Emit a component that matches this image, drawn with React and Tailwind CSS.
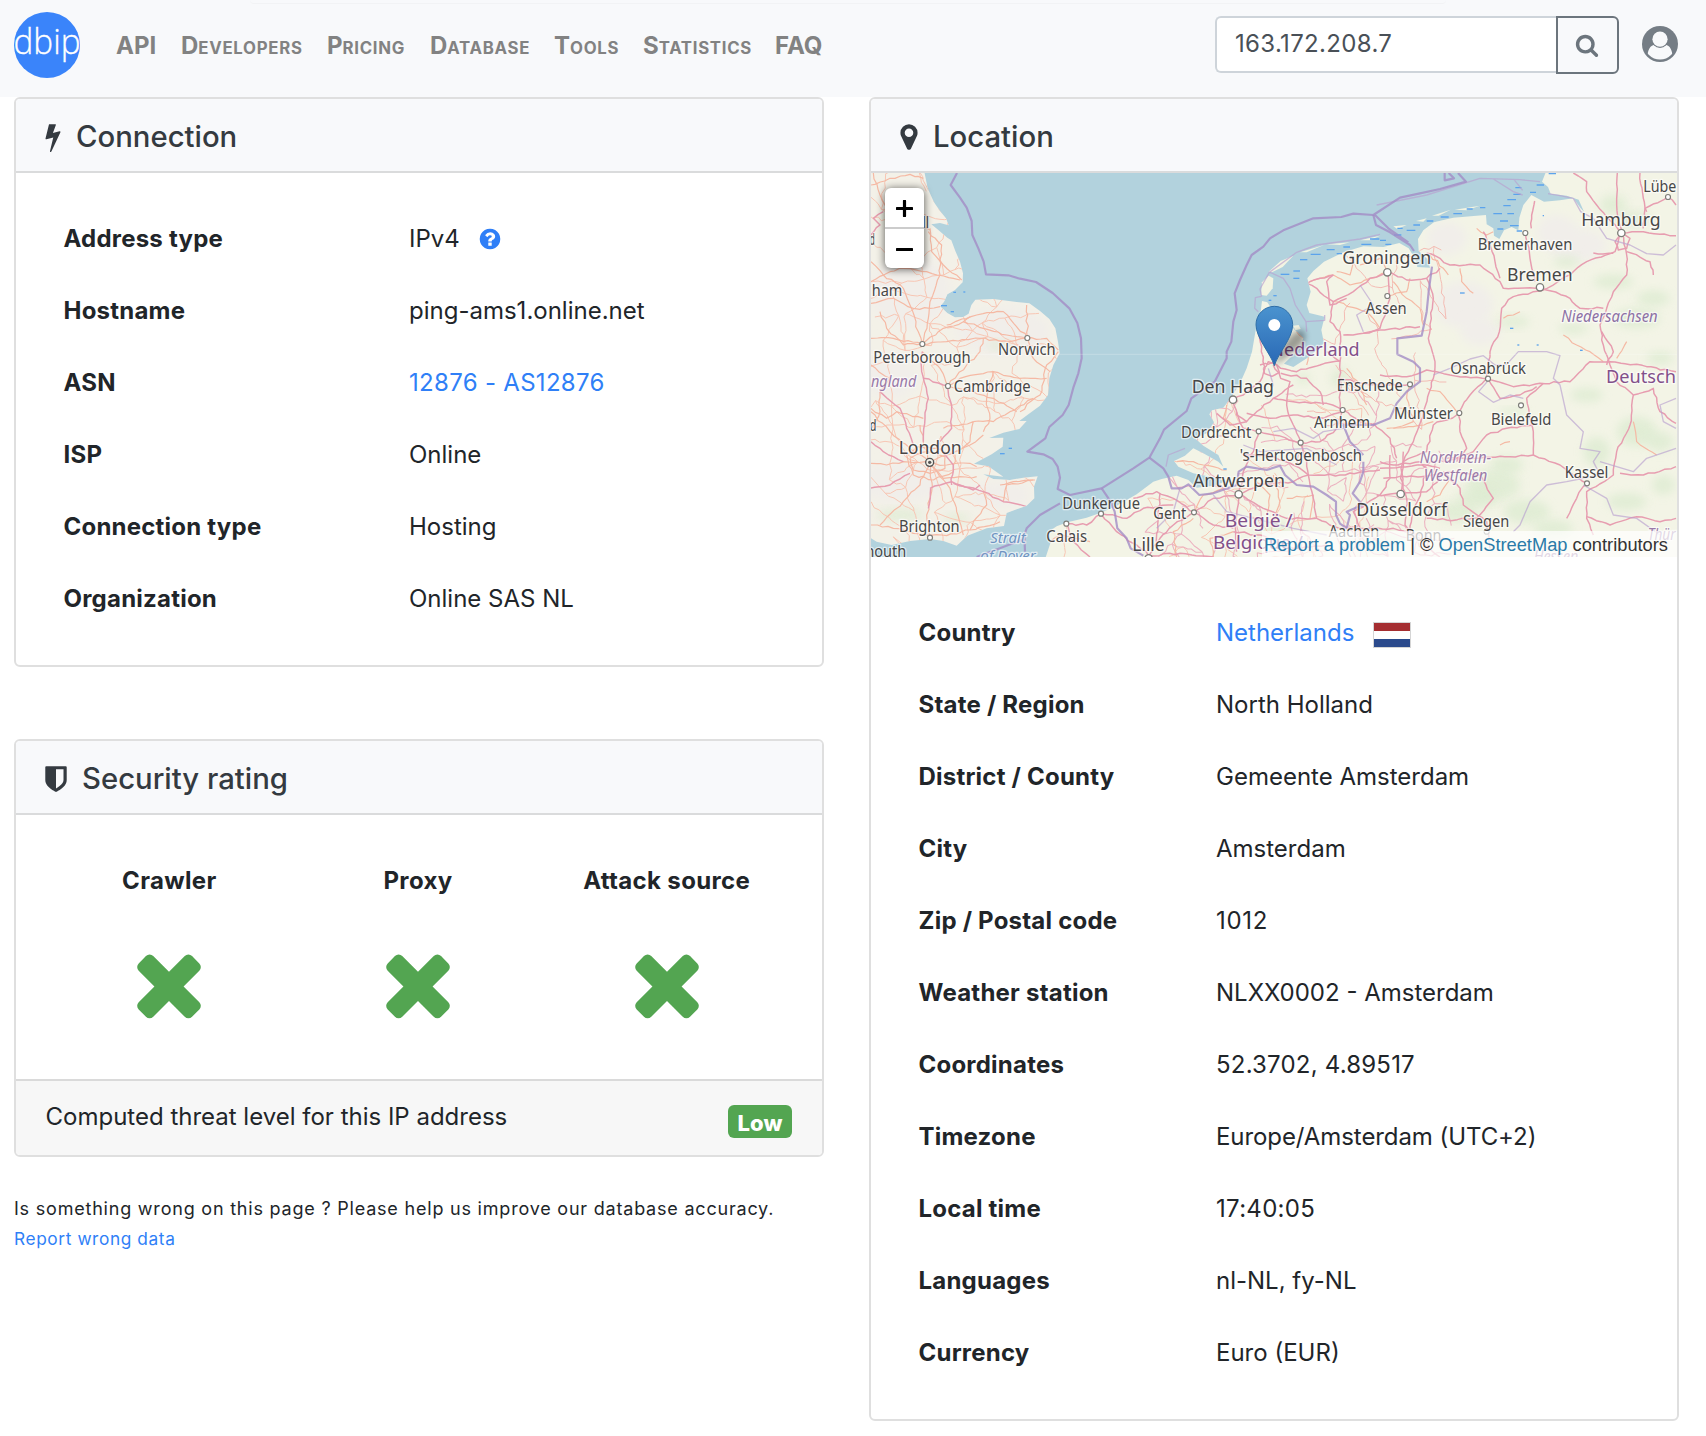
import React from "react";

const ICONS = {
  bolt: "M1333 566q18 20 7 44l-540 1157q-13 25-42 25-4 0-14-2-17-5-25.5-19t-4.5-30l197-808-406 101q-4 1-12 1-18 0-31-11-18-15-13-39l201-825q4-14 16-23t28-9h328q19 0 32 12.5t13 29.5q0 8-5 18l-171 463 396-98q8-2 12-2 19 0 34 15z",
  search:
    "M1216 832q0-185-131.5-316.5t-316.5-131.5-316.5 131.5-131.5 316.5 131.5 316.5 316.5 131.5 316.5-131.5 131.5-316.5zm512 832q0 52-38 90t-90 38q-54 0-90-38l-343-342q-179 124-399 124-143 0-273.5-55.5t-225-150-150-225-55.5-273.5 55.5-273.5 150-225 225-150 273.5-55.5 273.5 55.5 225 150 150 225 55.5 273.5q0 220-124 399l343 343q37 37 37 90z",
  marker:
    "M1152 640q0-106-75-181t-181-75-181 75-75 181 75 181 181 75 181-75 75-181zm256 0q0 109-33 179l-364 774q-16 33-47.5 52t-67.5 19-67.5-19-46.5-52l-365-774q-33-70-33-179 0-212 150-362t362-150 362 150 150 362z",
  shield:
    "M1344 960v-640h-448v1137q119-63 213-137 235-184 235-360zm192-768v768q0 86-33.5 170.5t-83 150-118 127.5-126.5 103-121 77.5-89.5 49.5-42.5 20q-12 6-26 6t-26-6q-16-7-42.5-20t-89.5-49.5-121-77.5-126.5-103-118-127.5-83-150-33.5-170.5v-768q0-26 19-45t45-19h1152q26 0 45 19t19 45z",
  question:
    "M1024 1376v-192q0-14-9-23t-23-9h-192q-14 0-23 9t-9 23v192q0 14 9 23t23 9h192q14 0 23-9t9-23zm256-672q0-88-55.5-163t-138.5-116-170-41q-243 0-371 213-15 24 8 42l132 100q7 6 19 6 16 0 25-12 53-68 86-92 34-24 86-24 48 0 85.5 26t37.5 59q0 38-20 61t-68 45q-63 28-115.5 86.5t-52.5 125.5v36q0 14 9 23t23 9h192q14 0 23-9t9-23q0-19 21.5-49.5t54.5-49.5q32-18 49-28.5t46-35 44.5-48 28-60.5 12.5-81zm384 192q0 209-103 385.5t-279.5 279.5-385.5 103-385.5-103-279.5-279.5-103-385.5 103-385.5 279.5-279.5 385.5-103 385.5 103 279.5 279.5 103 385.5z",
  times:
    "M1490 1322q0 40-28 68l-136 136q-28 28-68 28t-68-28l-294-294-294 294q-28 28-68 28t-68-28l-136-136q-28-28-28-68t28-68l294-294-294-294q-28-28-28-68t28-68l136-136q28-28 68-28t68 28l294 294 294-294q28-28 68-28t68 28l136 136q28 28 28 68t-28 68l-294 294 294 294q28 28 28 68z",
};

function Icon({ name, className }) {
  return (
    <svg viewBox="0 0 1792 1792" className={className} fill="currentColor" aria-hidden="true">
      <path d={ICONS[name]} />
    </svg>
  );
}

/* ---------- map ---------- */

function random(seed) {
  let s = seed * 9301 + 49297;
  return () => {
    s = (s * 9301 + 49297) % 233280;
    return s / 233280 - 0.5;
  };
}

// Deterministic wobble, so that straight segments read as roads.
function wobble(points, seed, amp = 7) {
  const rnd = random(seed);
  let d = `M${points[0]} ${points[1]}`;
  for (let i = 2; i < points.length; i += 2) {
    const [x0, y0, x1, y1] = [points[i - 2], points[i - 1], points[i], points[i + 1]];
    const n = Math.max(1, Math.round(Math.hypot(x1 - x0, y1 - y0) / 16));
    for (let k = 1; k <= n; k++) {
      const t = k / n;
      const a = k === n ? 0 : amp;
      d += `L${(x0 + (x1 - x0) * t + rnd() * a).toFixed(0)} ${(y0 + (y1 - y0) * t + rnd() * a).toFixed(0)}`;
    }
  }
  return d;
}

// Local road web: loosely scattered junctions joined to some of their neighbours.
function web(x0, y0, x1, y1, step, keep, seed) {
  const rnd = random(seed);
  const cols = Math.ceil((x1 - x0) / step) + 1;
  const rows = Math.ceil((y1 - y0) / step) + 1;
  const pts = [];
  for (let r = 0; r < rows; r++)
    for (let c = 0; c < cols; c++) pts.push([x0 + c * step + rnd() * step * 0.9, y0 + r * step + rnd() * step * 0.9]);
  const out = [];
  for (let r = 0; r < rows; r++)
    for (let c = 0; c < cols; c++) {
      const a = pts[r * cols + c];
      const near = [c + 1 < cols && pts[r * cols + c + 1], r + 1 < rows && pts[(r + 1) * cols + c], c + 1 < cols && r + 1 < rows && pts[(r + 1) * cols + c + 1]];
      near.forEach((b, i) => {
        if (b && rnd() + 0.5 < (i === 2 ? keep / 2 : keep)) out.push(wobble([...a, ...b], seed + r * 17 + c * 5 + i, 11));
      });
    }
  return out.join("");
}

const WEB_UK = web(20, 30, 600, 1150, 74, 0.62, 7);
const WEB_LOW = web(880, 700, 1500, 1180, 66, 0.5, 11);
const WEB_RUHR = web(1480, 840, 1760, 1160, 56, 0.55, 23);
const WEB_EAST = web(1350, 260, 1700, 700, 84, 0.36, 31);
const WEB_LOW_MINOR = web(900, 720, 1500, 1180, 90, 0.32, 43);

const UK =
  "M30 20H193L203 70L222 112L240 138L258 160L266 181L240 174L214 178L236 196L262 218L274 226L286 258L300 290L309 325L308 352L285 375L262 388L252 410L240 424L262 444L285 457L310 456L326 446L334 420L346 404L400 402L470 411L508 415L540 438L568 462L586 490L594 530L599 565L580 600L568 640L564 690L540 722L505 748L478 768L500 768L478 792L430 803L388 819L430 818L428 845L395 868L342 896L385 904L430 935L370 928L400 942L450 945L490 938L533 934L522 965L523 1000L500 1022L440 1044L432 1083L380 1090L322 1112L290 1142L250 1128L210 1122L150 1128L95 1140L50 1130L30 1118Z";
const MAINLAND =
  "M556 1180L572 1132L566 1100L590 1084L622 1072L680 1058L726 1042L770 1022L830 988L880 950L905 942L950 932L985 945L1010 968L1060 962L1100 948L1050 935L1000 925L955 905L942 888L975 872L1000 850L1030 865L1075 890L1090 905L1075 870L1030 842L1005 820L1040 805L1062 772L1048 748L1056 736L1090 728L1112 700L1140 655L1160 610L1176 560L1188 490L1202 440L1206 408L1222 412L1240 440L1290 480L1310 500L1330 520L1318 552L1272 596L1300 606L1352 572L1392 535L1384 495L1394 455L1348 444L1340 420L1352 380L1342 340L1360 318L1392 290L1450 262L1510 244L1570 246L1618 234L1646 250L1666 282L1672 306L1710 308L1702 282L1676 258L1674 222L1690 196L1722 172L1780 158L1850 152L1878 150L1880 178L1900 190L1902 212L1918 222L1932 196L1955 186L1975 196L1978 158L1990 120L2014 90L2052 110L2100 106L2140 100L2162 130L2172 140L2156 104L2120 92L2072 86L2064 66L2046 50L2058 20H2460V1180Z";

const ISLANDS = [
  "M1203 390L1206 352L1226 332L1240 340L1238 370L1220 392Z",
  "M1226 320L1262 288L1300 272L1268 306L1236 322Z",
  "M1320 262L1392 240L1340 262Z",
  "M1400 238L1470 232L1440 240Z",
  "M1500 226L1560 212L1530 226Z",
  "M1600 184L1640 180L1612 192Z",
  "M1668 168L1700 160L1690 170Z",
  "M1716 152L1772 134L1736 152Z",
  "M1784 134L1860 122L1820 136Z",
  "M990 892L1040 900L1088 915L1050 925L1000 915Z",
  "M1300 482L1316 480L1322 492L1306 496Z",
];

const BORDERS = [
  "M291 24L272 60L300 98L320 128L335 168L337 210L355 250L371 290L378 328L445 331L480 341L528 351L578 384L628 430L652 474L663 520L665 580L655 625L640 668L626 720L608 750L568 786L556 820L502 860L550 868L578 882L593 905L600 938L593 972L630 990L725 970L820 910L868 878L900 820L912 794L980 738L994 700L1064 650L1100 580L1100 560L1114 530L1120 470L1130 435L1124 385L1140 345L1160 300L1175 270L1210 245L1230 220L1270 196L1360 160L1444 156L1480 146L1540 150L1620 98L1680 85L1740 72L1818 50L1794 24M1754 24L1754 46L1782 40L1766 24",
  "M1540 150L1548 180L1590 202L1650 240L1662 258M1545 150L1585 190L1645 232",
  "M725 970L752 1010L764 1040L772 1090L800 1120L812 1150L850 1172M868 878L910 910L925 935L935 970L965 970L985 958L1018 990L1060 985L1130 960L1136 920L1160 905L1220 915L1260 902L1275 930L1310 960L1360 965L1400 990L1428 1010L1428 1050L1440 1076L1460 1090L1470 1050L1460 1040L1508 1020L1478 985L1500 950L1510 920L1510 890",
  "M1716 305L1706 380L1700 440L1685 512L1612 520L1612 568L1660 590L1680 610L1680 650L1640 680L1610 715L1590 760L1540 780L1450 780L1470 830L1510 870",
  "M600 1015L540 1050L500 1090L493 1110L495 1160M493 1122L350 1176",
];

const THIN_BORDERS = [
  "M1195 440L1184 430L1186 398L1204 394M1205 395L1200 372L1228 322L1310 262L1370 240L1500 222L1560 208",
  "M1230 322L1270 340L1290 370L1306 420L1338 470L1394 466L1394 450M1338 470L1340 500",
  "M1550 120L1700 90L1860 40L1980 44L2040 50M1900 42L1960 80L1988 90M1962 44L1988 76M2064 86L2100 92L2140 100L2162 140L2200 160L2240 220L2310 240L2360 266L2410 270L2448 240",
  "M1720 630L1770 610L1830 582L1870 572L1905 600L1940 598L1975 560L2060 560L2100 572L2080 640L2100 660L2120 750L2170 800L2160 850L2220 860L2200 890L2220 930L2120 950L2060 960L2010 1010L1980 1080L1960 1100",
  "M2170 960L2240 1000L2260 1050L2330 1060L2400 1110M2448 700L2400 720L2410 770L2448 790M2220 890L2320 920L2360 880L2448 850",
  "M1890 640L1856 680L1900 712L1950 690L1990 700",
  "M1500 360L1540 420L1490 450L1510 500M918 905L925 870L975 850M1240 800L1300 790L1360 820L1390 800L1450 790",
  "M1430 900L1340 850L1200 860L1150 840M1220 700L1240 660L1225 610",
  "M1060 990L1100 1040L1180 1060L1300 1090L1400 1110M960 970L940 1040L890 1090",
];

const MAJOR = [
  [2284, 204, 2265, 260, 2180, 290, 2130, 330, 2050, 375, 1960, 395, 1925, 430, 1918, 500, 1890, 560, 1880, 640, 1830, 690, 1790, 750, 1720, 780, 1700, 860, 1630, 890, 1625, 990],
  [2284, 204, 2300, 270, 2300, 330, 2260, 380, 2240, 430, 2220, 480, 2230, 540, 2250, 600, 2270, 650, 2320, 690, 2310, 780, 2270, 860, 2260, 930, 2180, 980, 2180, 1060, 2200, 1110],
  [2040, 367, 1930, 370, 1920, 350, 1860, 300, 1770, 300, 1740, 280, 1700, 265],
  [2040, 367, 2130, 400, 2160, 430, 2230, 430],
  [1920, 340, 1905, 290, 1890, 240, 1870, 200],
  [1996, 204, 2010, 280, 2025, 350],
  [2014, 190, 2015, 150, 2024, 108],
  [2284, 204, 2210, 120, 2180, 80, 2180, 50, 2140, 24],
  [2284, 204, 2270, 120, 2272, 24],
  [2284, 204, 2350, 200, 2448, 212],
  [2284, 204, 2310, 220, 2300, 250, 2275, 255, 2265, 230, 2284, 204],
  [2300, 260, 2370, 290, 2380, 330],
  [2350, 190, 2355, 130, 2424, 96, 2448, 120],
  [2340, 24, 2350, 100, 2360, 140],
  [2260, 265, 2200, 264],
  [1582, 322, 1590, 400, 1560, 490, 1510, 505, 1450, 510],
  [1582, 322, 1640, 345, 1700, 340, 1740, 310],
  [1582, 322, 1530, 340, 1480, 380, 1420, 410, 1370, 370, 1340, 355],
  [1420, 410, 1410, 470, 1440, 500, 1440, 590],
  [1420, 330, 1400, 350, 1410, 420, 1460, 400],
  [1420, 330, 1350, 350, 1270, 420],
  [1700, 340, 1720, 400, 1705, 520, 1725, 590, 1720, 640, 1690, 740, 1660, 830, 1630, 890],
  [1510, 505, 1560, 495, 1680, 485],
  [1884, 641, 1770, 630, 1700, 615, 1640, 635, 1560, 630],
  [1884, 641, 1960, 665, 2040, 655, 2130, 650, 2190, 590, 2250, 590, 2360, 605, 2448, 620],
  [2240, 600, 2260, 560, 2225, 500],
  [2050, 655, 2000, 700, 2010, 760, 2020, 800, 2020, 870, 2100, 900, 2181, 955],
  [2020, 870, 1950, 875, 1860, 880, 1760, 880],
  [1884, 641, 1920, 700, 1980, 690, 2030, 665],
  [2020, 780, 1940, 790, 1880, 810, 1840, 860, 1760, 890],
  [1798, 744, 1800, 800, 1820, 850, 1790, 890],
  [2181, 955, 2150, 1000, 2120, 1060],
  [2280, 925, 2350, 930, 2448, 905],
  [2320, 690, 2380, 670, 2400, 740, 2448, 775],
  [2180, 1055, 2250, 1080, 2330, 1055, 2400, 1070, 2448, 1060],
  [1700, 1060, 1760, 1065, 1850, 1060, 1900, 1000, 1860, 930, 1760, 920],
  [1750, 920, 1800, 970, 1810, 1020, 1880, 1070, 1890, 1150],
  [1560, 890, 1600, 900, 1680, 890, 1700, 910, 1690, 960, 1660, 1040, 1650, 1100, 1740, 1176],
  [1560, 910, 1700, 900, 1740, 910],
  [1570, 940, 1640, 935, 1750, 930],
  [1630, 860, 1622, 940, 1640, 1000, 1635, 1080, 1670, 1120],
  [1550, 990, 1622, 987, 1700, 980, 1740, 940],
  [1590, 870, 1590, 940, 1560, 990, 1480, 1040, 1500, 1090, 1600, 1090, 1680, 1110],
  [1540, 775, 1590, 820, 1610, 880],
  [1448, 735, 1400, 715, 1300, 710, 1240, 700],
  [1448, 735, 1500, 770, 1545, 780],
  [1440, 730, 1440, 590, 1400, 560],
  [1448, 735, 1430, 790, 1380, 830, 1322, 833],
  [1440, 640, 1530, 660, 1650, 658],
  [1240, 600, 1262, 640, 1290, 650, 1280, 720, 1300, 780, 1322, 833, 1340, 890, 1345, 930],
  [1200, 600, 1240, 592, 1262, 610, 1310, 620, 1380, 600, 1440, 588],
  [1210, 610, 1225, 590, 1250, 600, 1258, 622, 1236, 634, 1214, 626, 1210, 610],
  [1262, 625, 1340, 640, 1380, 680, 1390, 720],
  [1196, 500, 1204, 560, 1215, 610, 1200, 650, 1150, 690, 1119, 704],
  [1119, 704, 1130, 750, 1160, 770, 1190, 740, 1240, 700, 1300, 660],
  [1130, 740, 1150, 790, 1196, 799, 1180, 860, 1150, 920, 1136, 988],
  [1196, 799, 1240, 810, 1322, 833],
  [1160, 745, 1230, 760, 1300, 750, 1390, 760, 1448, 740],
  [1070, 745, 1110, 780, 1160, 770],
  [1150, 870, 1230, 870, 1300, 900, 1345, 930, 1440, 930, 1560, 915],
  [1345, 930, 1360, 1000, 1370, 1060, 1440, 1090, 1490, 1085],
  [1136, 988, 1200, 960, 1300, 950, 1345, 930],
  [1136, 988, 1060, 1000, 1002, 1042, 940, 1080, 900, 1120, 866, 1172],
  [1136, 988, 1125, 1080, 1130, 1160],
  [1136, 988, 1210, 1030, 1280, 1060, 1370, 1060],
  [1002, 1042, 1060, 1080, 1120, 1090],
  [1002, 1042, 940, 1000, 890, 980, 820, 1000],
  [1120, 1100, 1200, 1110, 1300, 1150, 1400, 1140],
  [723, 1046, 800, 1060, 850, 1030, 940, 1020],
  [619, 1076, 680, 1080, 723, 1046, 770, 1100, 830, 1140, 866, 1172],
  [619, 1076, 640, 1130, 690, 1176],
  [866, 1172, 960, 1165, 1060, 1176],
  [900, 985, 895, 1060, 890, 1140],
  [187, 560, 185, 620, 205, 700, 195, 760, 190, 830],
  [60, 680, 120, 730, 140, 790, 160, 840],
  [258, 663, 275, 720, 275, 790, 240, 830],
  [264, 663, 190, 640],
  [33, 830, 70, 860, 130, 890],
  [30, 970, 90, 960, 150, 925],
  [210, 970, 275, 950, 300, 960, 370, 980, 430, 1010, 500, 1025],
  [275, 960, 280, 900, 240, 850],
  [280, 955, 340, 975, 360, 960],
  [212, 970, 205, 1030],
  [33, 210, 60, 180, 40, 160, 70, 140],
];

const MINOR = [
  [33, 60, 90, 40, 150, 28, 190, 40],
  [40, 24, 60, 90, 80, 130, 180, 180, 210, 195],
  [33, 290, 70, 330, 130, 370, 150, 420, 175, 500, 187, 537],
  [33, 350, 90, 320, 130, 310, 200, 320, 300, 345],
  [210, 190, 215, 260, 250, 300, 305, 345],
  [205, 200, 245, 240, 240, 330, 210, 410, 205, 460, 187, 537],
  [33, 415, 100, 400, 160, 430, 210, 430, 240, 425],
  [60, 440, 80, 490, 130, 540, 187, 537],
  [33, 520, 100, 520, 187, 537],
  [187, 537, 250, 490, 310, 470, 330, 455],
  [187, 537, 260, 530, 360, 520, 450, 530, 502, 519],
  [310, 470, 370, 490, 440, 510, 502, 519],
  [502, 519, 500, 420],
  [502, 519, 560, 520, 595, 555],
  [502, 519, 430, 440, 350, 450, 260, 480],
  [502, 519, 520, 580, 570, 620],
  [595, 560, 560, 600, 540, 690, 480, 740],
  [33, 600, 90, 640, 60, 680],
  [187, 560, 240, 610, 264, 663],
  [264, 663, 320, 600, 360, 560, 370, 520],
  [264, 663, 340, 680, 400, 700, 470, 740],
  [264, 663, 300, 640, 400, 620, 480, 640, 560, 640],
  [400, 620, 380, 700, 390, 760, 370, 800],
  [340, 770, 400, 770, 450, 740, 520, 700],
  [250, 790, 340, 770, 330, 830, 290, 860],
  [33, 730, 80, 760, 110, 740, 190, 760],
  [33, 790, 60, 740, 60, 680],
  [33, 895, 80, 900, 130, 890, 209, 892],
  [209, 892, 260, 870, 330, 840, 370, 810],
  [209, 892, 150, 850, 90, 800, 33, 740],
  [209, 892, 190, 830, 180, 780],
  [209, 892, 260, 900, 330, 895, 350, 905],
  [209, 892, 180, 960, 130, 1010, 60, 1080],
  [209, 892, 215, 980, 200, 1050, 210, 1118],
  [209, 892, 270, 970, 290, 1040, 310, 1110],
  [209, 892, 250, 940, 350, 935],
  [140, 870, 160, 930, 220, 945, 280, 920, 285, 870, 230, 850, 170, 845, 140, 870],
  [150, 880, 160, 915, 210, 925, 255, 910, 255, 875, 200, 860, 150, 880],
  [33, 1080, 100, 1090, 160, 1105, 260, 1112, 330, 1095, 420, 1070],
  [370, 980, 380, 1020, 340, 1070, 330, 1095],
  [420, 960, 460, 950, 525, 945],
  [430, 1010, 440, 960, 520, 945],
  [1350, 350, 1420, 330, 1470, 360, 1530, 340, 1582, 322],
  [1430, 320, 1470, 330, 1480, 290],
  [1582, 322, 1560, 280, 1500, 300],
  [1600, 350, 1640, 400, 1680, 430, 1690, 480],
  [1582, 393, 1640, 380, 1650, 340],
  [1560, 490, 1530, 450, 1490, 430, 1420, 410],
  [1800, 310, 1805, 350, 1840, 385],
  [1710, 270, 1750, 310, 1765, 330],
  [1850, 190, 1880, 210, 1900, 200],
  [2110, 510, 2150, 540, 2190, 560, 2230, 590],
  [2270, 580, 2300, 530],
  [2320, 770, 2330, 830, 2390, 870],
  [1700, 670, 1740, 680, 1790, 740],
  [1650, 658, 1640, 700, 1660, 770, 1600, 790],
  [1580, 790, 1660, 785, 1720, 770],
  [1100, 720, 1090, 760, 1130, 790],
  [950, 890, 1000, 890, 1060, 905, 1100, 915],
  [1240, 930, 1260, 1010, 1240, 1070],
  [1002, 1042, 1030, 990, 1090, 970],
  [570, 1130, 600, 1110, 690, 1130],
  [950, 1176, 940, 1100, 1000, 1060],
  [1060, 1176, 1050, 1120, 1120, 1100],
  [1280, 1000, 1360, 990, 1350, 1060],
  [1180, 940, 1230, 990, 1220, 1050],
  [1700, 1010, 1740, 990, 1770, 940],
  [1920, 840, 1950, 830],
  [1930, 460, 1960, 450, 1980, 440],
  [1460, 610, 1500, 660, 1520, 720],
  [1340, 600, 1350, 540, 1310, 500],
];

const WOODS = [
  [2330, 800, 60, 45], [2400, 830, 40, 30], [2330, 460, 70, 30], [2260, 350, 60, 22], [2380, 400, 50, 24],
  [2140, 490, 45, 16], [2180, 690, 50, 20], [2210, 860, 40, 44], [1900, 960, 80, 46], [2000, 1040, 70, 36],
  [1790, 1040, 60, 30], [2300, 1010, 60, 26], [2080, 1090, 60, 26], [1440, 640, 26, 30], [1850, 1000, 60, 30],
  [1560, 1130, 60, 24], [1960, 740, 44, 10], [2400, 580, 40, 20], [1240, 1090, 60, 16], [2320, 160, 50, 20],
  [120, 1050, 70, 16], [290, 1060, 40, 12], [420, 540, 40, 12], [100, 160, 30, 20], [2260, 120, 40, 30],
  [1940, 900, 50, 26], [2410, 960, 34, 30], [1330, 640, 22, 16], [2120, 290, 40, 16], [1960, 470, 50, 16],
];

const GREY_PATCHES = [
  [150, 380, 120, 110], [430, 500, 140, 70], [120, 950, 130, 60], [420, 990, 90, 40], [1760, 220, 60, 50],
  [1810, 420, 90, 70], [2150, 240, 90, 50], [90, 640, 80, 60], [2090, 200, 60, 50], [1860, 500, 60, 40],
];

const TIDES = [
  [1262, 328, 26], [1300, 340, 18], [1320, 284, 22], [1352, 268, 30], [1300, 318, 20], [1400, 254, 24], [1450, 246, 20],
  [1504, 238, 30], [1530, 222, 28], [1560, 226, 18], [1602, 210, 22], [1640, 196, 26], [1612, 190, 16], [1660, 180, 20],
  [1700, 168, 20], [1742, 156, 24], [1780, 146, 26], [1820, 132, 18], [1860, 128, 16], [1900, 146, 26], [1930, 122, 22],
  [1942, 104, 26], [1920, 168, 24], [1950, 182, 26], [1912, 192, 18], [1966, 68, 18], [1960, 88, 22], [2030, 60, 22],
  [2010, 82, 18], [2066, 26, 22], [1942, 146, 20], [1226, 406, 8], [243, 422, 18], [272, 440, 10], [280, 382, 8],
  [310, 381, 6], [420, 866, 14], [446, 850, 10], [1800, 384, 14], [1950, 490, 10], [2030, 540, 6], [2160, 556, 8],
  [1090, 912, 10], [1240, 392, 10], [1972, 540, 6], [2048, 152, 4], [1970, 198, 16], [1576, 238, 18], [1430, 266, 16],
];

const TOWNS = [
  [187, 537], [502, 519], [264, 663], [210, 1118], [723, 1046], [619, 1076], [1002, 1042], [1196, 799], [1322, 833],
  [1582, 393], [1996, 204], [2424, 96], [1884, 641], [1650, 658], [1448, 735], [1798, 744], [1983, 721], [2181, 955], [1880, 1100],
];
const CITIES = [[1119, 704], [1136, 988], [1582, 322], [2040, 367], [2284, 204], [1622, 987], [866, 1180]];

// text, left x, baseline y, drawn width, size
const PLACE_NAMES = [
  ["Peterborough", 41, 592, 292, 46], ["Norwich", 415, 569, 173, 46], ["Cambridge", 282, 680, 231, 46],
  ["London", 117, 866, 189, 53], ["Brighton", 118, 1100, 182, 46], ["Dunkerque", 608, 1030, 233, 46],
  ["Calais", 560, 1129, 122, 46], ["Gent", 881, 1060, 99, 46], ["Lille", 818, 1157, 97, 53],
  ["Den Haag", 996, 681, 247, 53], ["Dordrecht", 964, 816, 211, 46], ["'s-Hertogenbosch", 1140, 887, 367, 46],
  ["Antwerpen", 1000, 964, 276, 53], ["Groningen", 1448, 295, 267, 53], ["Assen", 1518, 446, 123, 46],
  ["Bremerhaven", 1854, 254, 284, 46], ["Bremen", 1942, 345, 197, 53], ["Hamburg", 2165, 182, 238, 53],
  ["Osnabrück", 1772, 624, 227, 46], ["Enschede", 1431, 675, 198, 46], ["Arnhem", 1363, 786, 168, 46],
  ["Münster", 1603, 761, 177, 46], ["Bielefeld", 1894, 777, 181, 46], ["Kassel", 2115, 938, 131, 46],
  ["Düsseldorf", 1490, 1050, 272, 53], ["Siegen", 1810, 1083, 139, 46], ["Aachen", 1407, 1115, 152, 46],
  ["Bonn", 1638, 1127, 107, 46], ["Lübe", 2351, 80, 99, 46], ["ham", 36, 392, 92, 46], ["ll", 188, 187, 20, 46],
  ["d", 30, 238, 15, 46], ["d", 30, 795, 20, 46], ["mouth", 3, 1173, 137, 46],
];
const AREAS = [
  ["Nederland", 1232, 571, 268, 54, "#82508a", "normal"],
  ["Deutsch", 2239, 651, 210, 54, "#82508a", "normal"],
  ["België /", 1095, 1083, 204, 54, "#82508a", "normal"],
  ["Belgique /", 1060, 1151, 270, 54, "#82508a", "normal"],
  ["ngland", 34, 664, 136, 48, "#9a7aa8", "italic"],
  ["Niedersachsen", 2105, 469, 289, 46, "#8d71a5", "italic"],
  ["Nordrhein-", 1680, 891, 214, 46, "#9a7aa8", "italic"],
  ["Westfalen", 1692, 945, 191, 46, "#9a7aa8", "italic"],
  ["Thür", 2364, 1123, 84, 46, "#9a7aa8", "italic"],
  ["Hessen", 2022, 1188, 134, 46, "#9a7aa8", "italic"],
  ["Strait", 392, 1133, 106, 44, "#6f94c2", "italic"],
  ["of Dover", 362, 1186, 166, 44, "#6f94c2", "italic"],
];

function MapDrawing() {
  return (
    <svg viewBox="33 24 2418 1152" className="block h-full w-full" preserveAspectRatio="none">
      <defs>
        <clipPath id="land"><path d={UK} /><path d={MAINLAND} /></clipPath>
        <filter id="soft" x="-50%" y="-50%" width="200%" height="200%"><feGaussianBlur stdDeviation="14" /></filter>
        <filter id="shade" x="-50%" y="-50%" width="200%" height="200%"><feGaussianBlur stdDeviation="9" /></filter>
        <linearGradient id="pin" x1="0" y1="0" x2="0" y2="1">
          <stop offset="0" stopColor="#4a93cf" /><stop offset="1" stopColor="#2968b5" />
        </linearGradient>
      </defs>
      <rect x="33" y="24" width="2418" height="1152" fill="#b2d2dd" />
      <path d={UK} fill="#f3f1e8" />
      <path d={MAINLAND} fill="#f3f4e6" />
      {ISLANDS.map((d) => <path key={d} d={d} fill="#f3f4e2" />)}
      <g clipPath="url(#land)">
        {GREY_PATCHES.map(([x, y, rx, ry]) => (
          <ellipse key={`${x}${y}`} cx={x} cy={y} rx={rx} ry={ry} fill="#f1eeea" filter="url(#soft)" />
        ))}
        {WOODS.map(([x, y, rx, ry]) => (
          <ellipse key={`${x}${y}`} cx={x} cy={y} rx={rx} ry={ry} fill="#dcebd0" opacity=".75" filter="url(#soft)" />
        ))}
        <g fill="none" strokeLinejoin="round">
          <path d={WEB_UK} stroke="#f7c6b4" strokeWidth="3" />
          <path d={WEB_LOW_MINOR} stroke="#f7c6b4" strokeWidth="3" />
          <path d={WEB_LOW} stroke="#ecb2c0" strokeWidth="3.2" />
          <path d={WEB_RUHR} stroke="#ecb2c0" strokeWidth="3.2" />
          <path d={WEB_EAST} stroke="#f3bcb4" strokeWidth="3" />
          {MINOR.map((p, i) => <path key={i} d={wobble(p, i + 3)} stroke="#f5b9a4" strokeWidth="3.6" />)}
          {MAJOR.map((p, i) => <path key={i} d={wobble(p, i + 40, 6)} stroke="#e79db0" strokeWidth="4.4" />)}
        </g>
      </g>
      <g stroke="#5ba3ec" strokeWidth="4">
        {TIDES.map(([x, y, w]) => <path key={`${x}-${y}`} d={`M${x} ${y}h${w}`} />)}
      </g>
      <g fill="none" strokeLinejoin="round">
        {THIN_BORDERS.map((d) => <path key={d} d={d} stroke="#b9a0d0" strokeOpacity=".65" strokeWidth="4" />)}
        {BORDERS.map((d) => <path key={d} d={d} stroke="#a38cc6" strokeOpacity=".8" strokeWidth="6.5" />)}
      </g>
      <path d="M33 568H2451" stroke="#ffffff" strokeOpacity=".35" strokeWidth="2" />
      {TOWNS.map(([x, y]) => (
        <circle key={`${x}${y}`} cx={x} cy={y} r="7.5" fill="#fff" stroke="#7d7d78" strokeWidth="3.5" />
      ))}
      {CITIES.map(([x, y]) => (
        <circle key={`${x}${y}`} cx={x} cy={y} r="11" fill="#fff" stroke="#7d7d78" strokeWidth="4" />
      ))}
      <circle cx="209" cy="892" r="12" fill="#f3f1e8" stroke="#555" strokeWidth="4" />
      <circle cx="209" cy="892" r="5" fill="#555" />
      <g transform="translate(-1 2)" style={{ fontFamily: '"Noto Sans", sans-serif', paintOrder: "stroke" }} stroke="#ffffff" strokeOpacity=".6" strokeWidth="8" strokeLinejoin="round">
        {AREAS.map(([t, x, y, w, s, c, st]) => (
          <text key={t} x={x} y={y} fontSize={s} fill={c} fontStyle={st} textLength={w} lengthAdjust="spacingAndGlyphs">{t}</text>
        ))}
        {PLACE_NAMES.map(([t, x, y, w, s]) => (
          <text key={t + y} x={x} y={y} fontSize={s} fill="#474747" textLength={w} lengthAdjust="spacingAndGlyphs">{t}</text>
        ))}
      </g>
      <path d="M1243 602L1262 556Q1290 500 1325 494Q1350 512 1318 546Z" fill="#000" opacity=".36" filter="url(#shade)" />
      <path d="M1243 602C1232 565 1188 520 1188 479A55 55 0 0 1 1298 479C1298 520 1254 565 1243 602Z" fill="url(#pin)" stroke="#2e6ea8" strokeWidth="3" />
      <circle cx="1243" cy="480" r="18" fill="#fff" />
    </svg>
  );
}

/* ---------- page ---------- */

const NAV = [
  ["API", "", "w-[40px]"], ["D", "evelopers", "w-[121px]"], ["P", "ricing", "w-[78px]"], ["D", "atabase", "w-[99px]"],
  ["T", "ools", "w-[64px]"], ["S", "tatistics", "w-[107px]"], ["FAQ", "", "w-[48px]"],
];

const CONNECTION = [
  ["Address type", "IPv4", "help"], ["Hostname", "ping-ams1.online.net"], ["ASN", "12876 - AS12876", "link", "tracking-[0.3px]"],
  ["ISP", "Online"], ["Connection type", "Hosting"], ["Organization", "Online SAS NL"],
];

const LOCATION = [
  ["Country", "Netherlands", "flag"], ["State / Region", "North Holland"], ["District / County", "Gemeente Amsterdam"],
  ["City", "Amsterdam"], ["Zip / Postal code", "1012", "", "tracking-[0.7px]"], ["Weather station", "NLXX0002 - Amsterdam"],
  ["Coordinates", "52.3702, 4.89517", "", "tracking-[0.2px]"], ["Timezone", "Europe/Amsterdam (UTC+2)", "", "tracking-[-0.08px]"],
  ["Local time", "17:40:05", "", "tracking-[0.3px]"], ["Languages", "nl-NL, fy-NL"], ["Currency", "Euro (EUR)"],
];

function Card({ children, className = "" }) {
  return <section className={`overflow-hidden rounded-[6px] border-2 border-[#dfdfdf] bg-white ${className}`}>{children}</section>;
}

function CardHeader({ icon, iconClass, children }) {
  return (
    <h2 className="flex h-[74px] items-center border-b-2 border-[#dadbdc] bg-[#f8f9fb] pt-[3px] pl-[30px] text-[29.3px] font-medium text-[#343a40]">
      <Icon name={icon} className={iconClass} />
      {children}
    </h2>
  );
}

function Flag() {
  return (
    <span className="mt-[3px] ml-[19px] flex h-[26px] w-[38px] flex-col border border-[#d5d5d5]">
      <span className="flex-1 bg-[#a52e31]" />
      <span className="flex-1 bg-white" />
      <span className="flex-1 bg-[#2b4a8c]" />
    </span>
  );
}

function Rows({ data, labelClass }) {
  return (
    <dl>
      {data.map(([label, value, kind, tracking = ""]) => (
        <div key={label} className="flex h-[72px] items-center text-[24px]">
          <dt className={`font-bold tracking-[0.22px] whitespace-nowrap ${labelClass}`}>{label}</dt>
          <dd className={`flex items-center whitespace-nowrap ${tracking} ${kind === "link" || kind === "flag" ? "text-[#2f7ff7]" : ""}`}>
            {value}
            {kind === "help" && <Icon name="question" className="ml-[18px] size-[24px] text-[#2f7ff7]" />}
            {kind === "flag" && <Flag />}
          </dd>
        </div>
      ))}
    </dl>
  );
}

function Logo() {
  return (
    <svg viewBox="0 0 66 66" className="size-[66px]">
      <circle cx="33" cy="33" r="33" fill="#3a84fa" />
      <text x="-0.500" y="42" fontSize="35" fontWeight="300" fill="#fff" stroke="#fff" strokeWidth=".35" textLength="67" lengthAdjust="spacingAndGlyphs" style={{ fontFamily: '"Open Sans", sans-serif' }}>dbip</text>
    </svg>
  );
}

export default function App() {
  return (
    <div className="relative h-[1436px] w-[1706px] overflow-hidden bg-white font-['Inter',sans-serif] text-[#212529]">
      <div className="absolute top-0 left-[250px] h-[4px] w-[1196px] rounded-b-[4px] border-b border-[#f2f3f5]" />
      <header className="flex h-[97px] bg-[#f8f9fb] pl-[14px]">
        <div className="mt-[12px]"><Logo /></div>
        <nav className="ml-[36px] flex h-[92px] items-center gap-[25px]">
          {NAV.map(([head, rest, width]) => (
            <a key={head + rest} className={`text-[24px] font-bold whitespace-nowrap text-[#828282] ${width}`}>
              {head}
              {rest && <span className="text-[16.8px] tracking-[0.7px] uppercase">{rest}</span>}
            </a>
          ))}
        </nav>
        <div className="mt-[16px] ml-auto flex">
          <div className="flex h-[57px] w-[341px] items-center rounded-l-[6px] border-2 border-r-0 border-[#ced4da] bg-white pb-[1px] pl-[18px] text-[24px] tracking-[0.33px] text-[#495057]">163.172.208.7</div>
          <button className="flex h-[58px] w-[63px] items-center justify-center rounded-r-[6px] border-2 border-[#6c757d] pr-[2px] text-[#6c757d]">
            <Icon name="search" className="size-[24px]" />
          </button>
        </div>
        <svg viewBox="0 0 36 36" className="mt-[26px] mr-[28px] ml-[23px] size-[36px]">
          <defs><clipPath id="face"><circle cx="18" cy="18" r="15.6" /></clipPath></defs>
          <circle cx="18" cy="18" r="18" fill="#757d85" />
          <g clipPath="url(#face)">
            <path d="M5 36C5 24 8 19.500 12.500 18.800Q18 24.500 23.500 18.800C28 19.500 31 24 31 36Z" fill="#f8f9fb" />
          </g>
          <circle cx="18" cy="13.200" r="8.600" fill="#757d85" />
          <circle cx="18" cy="13.200" r="7.600" fill="#f8f9fb" />
        </svg>
      </header>

      <main className="flex items-start justify-between pr-[27px] pl-[14px]">
        <div className="flex w-[810px] flex-col">
          <Card>
            <CardHeader icon="bolt" iconClass="-ml-[8px] mr-[8px] size-[30px]">Connection</CardHeader>
            <div className="py-[30px] pl-[47.5px]"><Rows data={CONNECTION} labelClass="w-[345.5px]" /></div>
          </Card>

          <Card className="mt-[72px]">
            <CardHeader icon="shield" iconClass="-ml-[5px] mr-[11px] size-[30px]">Security rating</CardHeader>
            <div className="grid h-[264px] grid-cols-3 pt-[48px] pr-[31px] pl-[29px] text-center text-[24px] font-bold tracking-[0.35px]">
              {["Crawler", "Proxy", "Attack source"].map((name) => (
                <div key={name} className="flex flex-col items-center">
                  <span className="h-[36px] leading-[36px]">{name}</span>
                  <Icon name="times" className="mt-[36px] size-[96px] text-[#53a551]" />
                </div>
              ))}
            </div>
            <div className="flex h-[76px] items-start justify-between border-t-2 border-[#dadada] bg-[#f7f7f7] pr-[30px] pl-[29.5px] text-[24px]">
              <span className="mt-[18px] leading-[36px]">Computed threat level for this IP address</span>
              <span className="mt-[24px] flex h-[33px] w-[64px] items-center justify-center rounded-[6px] bg-[#53a551] pt-[3px] text-[22px] font-extrabold text-white">Low</span>
            </div>
          </Card>

          <p className="mt-[36px] text-[18px] leading-[31px] tracking-[0.79px] whitespace-nowrap">
            Is something wrong on this page ? Please help us improve our database accuracy.
          </p>
          <a className="text-[17.3px] leading-[30px] tracking-[0.6px] text-[#2f7ff7]">Report wrong data</a>
        </div>

        <Card className="w-[810px]">
          <CardHeader icon="marker" iconClass="-ml-[7px] mr-[9px] size-[30px]">Location</CardHeader>
          <div className="relative h-[384px]">
            <MapDrawing />
            <div className="absolute top-[15px] left-[14px] w-[39px] rounded-[6px] bg-white text-black shadow-[0_1px_8px_rgba(0,0,0,0.65)]">
              <div className="flex h-[41px] items-center justify-center border-b-2 border-[#ccc] pt-[2px]">
                <svg viewBox="0 0 16 16" className="size-[17px]"><path d="M8 1v14M1 8h14" stroke="#000" strokeWidth="3" strokeLinecap="round" /></svg>
              </div>
              <div className="flex h-[39px] items-center justify-center pt-[1px]">
                <svg viewBox="0 0 16 16" className="size-[17px]"><path d="M1 8h14" stroke="#000" strokeWidth="3" strokeLinecap="round" /></svg>
              </div>
            </div>
            <div className="absolute right-0 bottom-0 flex h-[26px] items-center bg-white/70 pt-[2px] pr-[9px] pl-[2px] font-['Liberation_Sans',sans-serif] text-[18.28px] whitespace-pre text-[#333]">
              <a className="text-[#2a7aa8]">Report a problem</a> | © <a className="text-[#2a7aa8]">OpenStreetMap</a> contributors
            </div>
          </div>
          <div className="pt-[40px] pb-[30px] pl-[47.5px]"><Rows data={LOCATION} labelClass="w-[297.5px]" /></div>
        </Card>
      </main>
    </div>
  );
}
